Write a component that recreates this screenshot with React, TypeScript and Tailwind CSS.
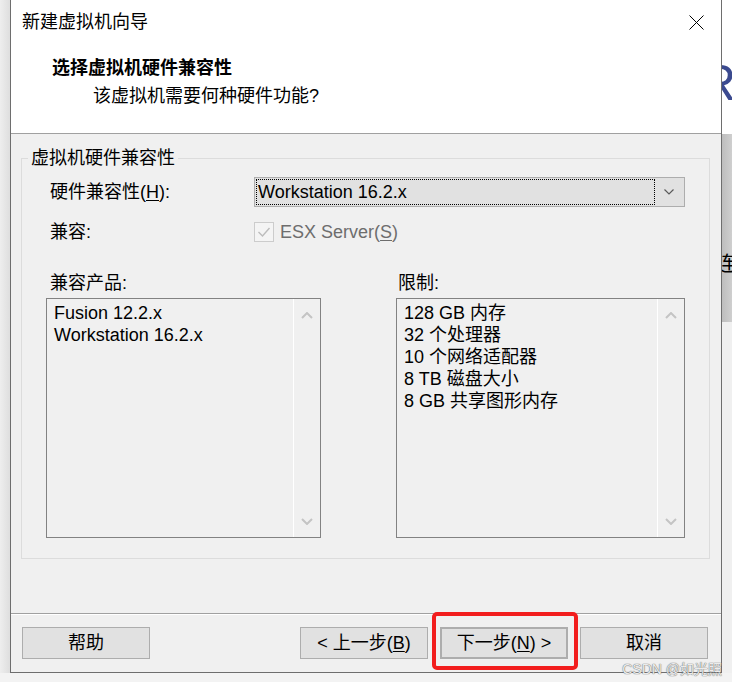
import React from "react";

// Scrollbar chevron used in the two list boxes
const ScrollArrow = ({ dir }: { dir: "up" | "down" }) => (
  <svg width="12" height="7" viewBox="0 0 12 7" fill="none">
    <path
      d={dir === "up" ? "M1 6 L6 1 L11 6" : "M1 1 L6 6 L11 1"}
      stroke="#c4c4c4"
      strokeWidth={2}
    />
  </svg>
);

const ListBox = ({ items, width }: { items: string[]; width: string }) => (
  <div className={`${width} h-[240px] flex border border-[#828282] bg-[#f0f0f0]`}>
    <div className="flex-1 flex flex-col pl-[7px] pt-[3px]">
      {items.map((it) => (
        <div key={it} className="leading-[22px] whitespace-nowrap">
          {it}
        </div>
      ))}
    </div>
    <div className="w-[27px] border-l border-white flex flex-col items-center justify-between pt-[13px] pb-[12px]">
      <ScrollArrow dir="up" />
      <ScrollArrow dir="down" />
    </div>
  </div>
);

const Button = ({ children, className = "" }: { children: React.ReactNode; className?: string }) => (
  <div
    className={`w-[128px] h-[32px] flex items-center justify-center bg-[#e1e1e1] border border-[#adadad] text-[18px] leading-[20px] ${className}`}
  >
    {children}
  </div>
);

export default function App() {
  return (
    <div className="w-[732px] h-[682px] overflow-hidden relative bg-[#f2f2f2] text-black font-['Liberation_Sans','Noto_Sans_CJK_SC',sans-serif] text-[18px] leading-[20px]">
      <div className="flex h-[673px]">
        {/* left backdrop */}
        <div className="w-[10px] bg-linear-to-r from-[#eeeeee] to-[#dedede]" />

        {/* Dialog */}
        <div className="w-[712px] flex flex-col border-x border-b border-[#6e6e6e] bg-[#f0f0f0]">
          {/* Header */}
          <div className="h-[134px] bg-white border-b border-[#a0a0a0] flex flex-col">
            <div className="h-[44px] flex items-center justify-between pl-[11px] pr-[17px]">
              <span>新建虚拟机向导</span>
              <svg width="15" height="15" viewBox="0 0 15 15">
                <path d="M0.5 0.5 L14.5 14.5 M14.5 0.5 L0.5 14.5" stroke="#000" strokeWidth={1} />
              </svg>
            </div>
            <div className="pl-[41px] mt-[12px] font-bold leading-[24px]">选择虚拟机硬件兼容性</div>
            <div className="pl-[82px] mt-[4px] leading-[24px]">该虚拟机需要何种硬件功能?</div>
          </div>

          {/* Body */}
          <div className="flex-1 pt-[14px] pl-[10px]">
            <fieldset className="w-[689px] border border-[#dcdcdc] pb-[20px]">
              <legend className="ml-[6px] px-[3px] leading-[20px]">虚拟机硬件兼容性</legend>

              <div className="px-[24px]">
                <div className="flex items-center h-[30px] mt-[9px]">
                  <div className="w-[208px] pl-[4px]">
                    硬件兼容性(<span className="underline underline-offset-2">H</span>):
                  </div>
                  <div className="w-[431px] h-[30px] flex border border-[#adadad] bg-[#e1e1e1] p-[1px]">
                    <div className="flex-1 flex items-center border border-dotted border-black pl-[1px]">
                      Workstation 16.2.x
                    </div>
                    <div className="w-[28px] flex items-center justify-center">
                      <svg width="10" height="6" viewBox="0 0 10 6" fill="none">
                        <path d="M0.5 0.5 L5 5 L9.5 0.5" stroke="#5a5a5a" strokeWidth={1.2} />
                      </svg>
                    </div>
                  </div>
                </div>

                <div className="flex items-center h-[20px] mt-[15px]">
                  <div className="w-[208px] pl-[4px]">兼容:</div>
                  <div className="w-[20px] h-[20px] border border-[#cccccc] bg-[#f4f4f4] flex items-center justify-center">
                    <svg width="14" height="14" viewBox="0 0 14 14" fill="none">
                      <path d="M1.5 7 L5.5 11 L12.5 3" stroke="#bcbcbc" strokeWidth={1.4} />
                    </svg>
                  </div>
                  <span className="ml-[6px] text-[#6d6d6d]">
                    ESX Server(<span className="underline underline-offset-2">S</span>)
                  </span>
                </div>

                <div className="flex mt-[31px] h-[20px]">
                  <div className="w-[350px] pl-[4px]">兼容产品:</div>
                  <div className="pl-[2px]">限制:</div>
                </div>

                <div className="flex gap-[75px] mt-[5px]">
                  <ListBox width="w-[275px]" items={["Fusion 12.2.x", "Workstation 16.2.x"]} />
                  <ListBox
                    width="w-[289px]"
                    items={["128 GB 内存", "32 个处理器", "10 个网络适配器", "8 TB 磁盘大小", "8 GB 共享图形内存"]}
                  />
                </div>
              </div>
            </fieldset>
          </div>

          {/* Footer */}
          <div className="h-[59px] border-t border-[#a0a0a0] shadow-[inset_0_1px_0_#ffffff] flex items-start pt-[13px] pl-[11px] pr-[13px]">
            <Button>帮助</Button>
            <div className="flex-1" />
            <div className="flex gap-[12px]">
              <Button>
                &lt; 上一步(<span className="underline underline-offset-2">B</span>)
              </Button>
              <div className="relative">
                <Button className="border-2 border-[#0078d7]">
                  下一步(<span className="underline underline-offset-2">N</span>) &gt;
                </Button>
                <div className="absolute -left-[8px] -top-[15px] w-[146px] h-[58px] border-[4px] border-[#f21d1d] rounded-[5px]" />
              </div>
              <Button>取消</Button>
            </div>
          </div>
        </div>

        {/* right backdrop: window behind the dialog */}
        <div className="w-[10px] flex flex-col overflow-hidden">
          <div className="h-[134px] bg-white overflow-hidden pt-[58px]">
            <div className="-ml-[22px] text-[50px] leading-none text-[#3b4a8f] whitespace-nowrap">R</div>
          </div>
          <div className="h-[188px] bg-linear-to-r from-[#bdbdbd] to-[#cfcfcf] overflow-hidden pt-[120px]">
            <div className="-ml-[6px] text-[20px] leading-[20px] whitespace-nowrap">连</div>
          </div>
          <div className="flex-1 bg-[#f0f0f0]" />
        </div>
      </div>
      <div className="h-[9px] bg-[#f3f3f3]" />

      {/* watermark */}
      <div className="absolute right-[10px] bottom-[5px] text-[14px] leading-[16px] text-[#ececec] [text-shadow:0_0_1px_#6a6a6a,0_0_1px_#6a6a6a]">
        CSDN @如光照
      </div>
    </div>
  );
}
